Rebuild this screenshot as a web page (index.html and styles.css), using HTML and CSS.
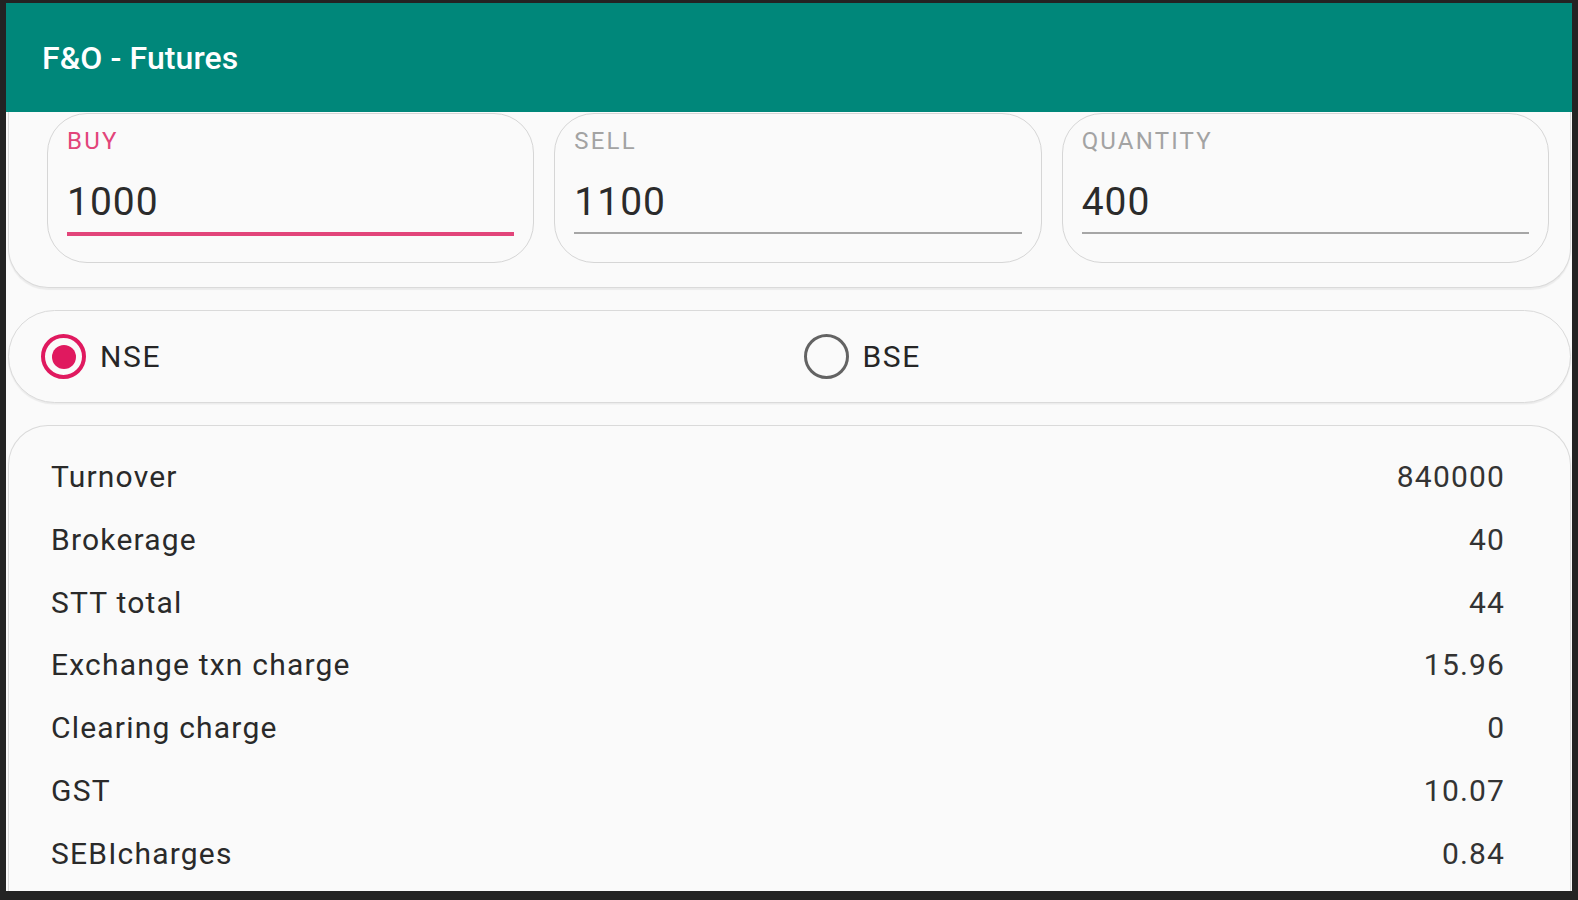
FILE: index.html
```html
<!DOCTYPE html>
<html lang="en">
<head>
<meta charset="utf-8">
<title>F&amp;O - Futures</title>
<link rel="stylesheet" href="styles.css">
</head>
<body>
<div class="screen">
  <header class="appbar">
    <h1 class="title">F&amp;O - Futures</h1>
  </header>
  <main class="content">
    <section class="card inputs-card">
      <div class="field focused">
        <div class="field-label">BUY</div>
        <div class="field-value">1000</div>
      </div>
      <div class="field">
        <div class="field-label">SELL</div>
        <div class="field-value">1100</div>
      </div>
      <div class="field">
        <div class="field-label">QUANTITY</div>
        <div class="field-value">400</div>
      </div>
    </section>

    <section class="card radio-card">
      <div class="radio-option">
        <span class="radio checked"><span class="radio-dot"></span></span>
        <span class="radio-label">NSE</span>
      </div>
      <div class="radio-option">
        <span class="radio"></span>
        <span class="radio-label">BSE</span>
      </div>
    </section>

    <section class="card results-card">
      <div class="row"><span class="row-label">Turnover</span><span class="row-value">840000</span></div>
      <div class="row"><span class="row-label">Brokerage</span><span class="row-value">40</span></div>
      <div class="row"><span class="row-label">STT total</span><span class="row-value">44</span></div>
      <div class="row"><span class="row-label">Exchange txn charge</span><span class="row-value">15.96</span></div>
      <div class="row"><span class="row-label">Clearing charge</span><span class="row-value">0</span></div>
      <div class="row"><span class="row-label">GST</span><span class="row-value">10.07</span></div>
      <div class="row"><span class="row-label">SEBIcharges</span><span class="row-value">0.84</span></div>
    </section>
  </main>
</div>
</body>
</html>
```

FILE: styles.css
```css
* {
  box-sizing: border-box;
}

html, body {
  margin: 0;
  padding: 0;
  height: 100%;
}

body {
  background: #232323;
  font-family: Roboto, "Liberation Sans", Arial, sans-serif;
  padding: 3px 6px 9px 6px;
  overflow: hidden;
}

.screen {
  height: 888px;
  background: #fafafa;
  overflow: hidden;
  display: flex;
  flex-direction: column;
}

.appbar {
  height: 109px;
  flex: 0 0 109px;
  background: #00877a;
  display: flex;
  align-items: center;
  padding-left: 36px;
  position: relative;
  z-index: 1;
}

.title {
  margin: 0;
  color: #ffffff;
  font-size: 32px;
  font-weight: 500;
  letter-spacing: 0.1px;
}

.content {
  flex: 1;
  overflow: hidden;
  padding: 0 1px 0 2px;
}

.card {
  background: #fafafa;
  border: 1.5px solid #dadada;
  box-shadow: 0 1.5px 1px rgba(0, 0, 0, 0.06);
}

.inputs-card {
  border-top: none;
  border-radius: 0 0 40px 40px;
  display: grid;
  grid-template-columns: repeat(3, 1fr);
  column-gap: 20px;
  padding: 1px 21px 24px 38px;
}

.field {
  border: 1.5px solid #d6d6d6;
  border-radius: 40px;
  height: 150px;
  padding: 12px 19px 0 19px;
}

.field-label {
  font-size: 24px;
  line-height: 30px;
  color: #a3a3a3;
  letter-spacing: 2.2px;
}

.field.focused .field-label {
  color: #e2457a;
}

.field-value {
  margin-top: 22px;
  font-size: 39px;
  line-height: 48px;
  color: #2b2b2b;
  letter-spacing: 1px;
  padding-bottom: 6px;
  border-bottom: 2px solid #a6a6a6;
}

.field.focused .field-value {
  border-bottom: 4px solid #e2457a;
}

.radio-card {
  margin-top: 22px;
  height: 93px;
  border-radius: 47px;
  display: grid;
  grid-template-columns: 1fr 1fr;
  align-items: center;
  padding: 0 4px 0 32px;
}

.radio-option {
  display: flex;
  align-items: center;
  gap: 14px;
}

.radio {
  width: 45px;
  height: 45px;
  border-radius: 50%;
  border: 3.5px solid #636363;
  display: flex;
  align-items: center;
  justify-content: center;
  flex: 0 0 45px;
}

.radio.checked {
  border: 4.5px solid #e0195f;
}

.radio-dot {
  width: 24px;
  height: 24px;
  border-radius: 50%;
  background: #e0195f;
}

.radio-label {
  font-size: 30px;
  color: #262626;
  letter-spacing: 1.6px;
}

.results-card {
  margin-top: 22px;
  border-bottom: none;
  border-radius: 40px 40px 0 0;
  padding: 20px 66px 0 42px;
  min-height: 520px;
}

.row {
  display: flex;
  justify-content: space-between;
  align-items: center;
  height: 62.8px;
  line-height: 62.8px;
  font-size: 30px;
  letter-spacing: 1.2px;
}

.row-label {
  color: #2a2a2a;
}

.row-value {
  color: #333333;
  margin-right: -1.2px;
}
```
